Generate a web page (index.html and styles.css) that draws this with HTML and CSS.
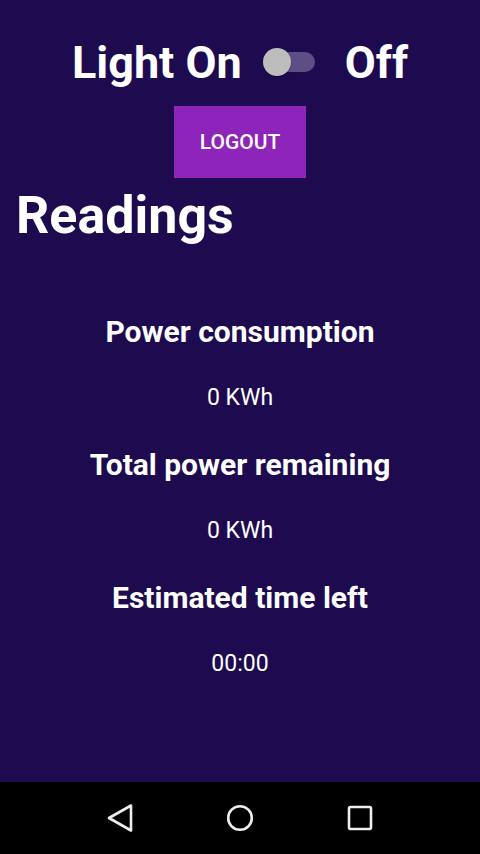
FILE: index.html
```html
<!DOCTYPE html>
<html>
<head>
<meta charset="utf-8">
<link rel="stylesheet" href="styles.css">
</head>
<body>
<div class="app">
  <div class="header">
    <span class="label">Light On</span>
    <span class="switch"><span class="track"></span><span class="thumb"></span></span>
    <span class="label">Off</span>
  </div>
  <div class="btn-row"><button class="logout">LOGOUT</button></div>
  <h1 class="title">Readings</h1>
  <div class="readings">
    <div class="item">
      <div class="item-title">Power consumption</div>
      <div class="item-value">0 KWh</div>
    </div>
    <div class="item">
      <div class="item-title">Total power remaining</div>
      <div class="item-value">0 KWh</div>
    </div>
    <div class="item">
      <div class="item-title">Estimated time left</div>
      <div class="item-value">00:00</div>
    </div>
  </div>
</div>
<div class="navbar">
  <svg class="nav-icon" width="28" height="30" viewBox="0 0 28 30"><path d="M25 2.5 L3 15 L25 27.5 Z" fill="none" stroke="#eeeeee" stroke-width="2.6" stroke-linejoin="round"/></svg>
  <svg class="nav-icon" width="28" height="28" viewBox="0 0 28 28"><circle cx="14" cy="14" r="11.8" fill="none" stroke="#eeeeee" stroke-width="2.6"/></svg>
  <svg class="nav-icon" width="28" height="28" viewBox="0 0 28 28"><rect x="3" y="3" width="22" height="22" rx="1.5" fill="none" stroke="#eeeeee" stroke-width="2.6"/></svg>
</div>
</body>
</html>
```

FILE: styles.css
```css
html, body {
  margin: 0;
  padding: 0;
}
body {
  width: 480px;
  height: 854px;
  font-family: Roboto, "Noto Sans", sans-serif;
  color: #ffffff;
  background: #000000;
  overflow: hidden;
}
.app {
  height: 782px;
  background: #1d0a4f;
  display: flex;
  flex-direction: column;
}
.header {
  display: flex;
  justify-content: center;
  align-items: center;
  height: 62px;
  padding-top: 31px;
}
.label {
  font-size: 45px;
  font-weight: 700;
  line-height: 1;
}
.switch {
  position: relative;
  width: 52px;
  height: 28px;
  margin: 0 30px 0 21px;
}
.track {
  position: absolute;
  left: 6px;
  right: 0;
  top: 4px;
  height: 20px;
  border-radius: 10px;
  background: #5d4f86;
}
.thumb {
  position: absolute;
  left: 0;
  top: 0;
  width: 28px;
  height: 28px;
  border-radius: 50%;
  background: #bdbdbd;
  box-shadow: 0 1px 2px rgba(0,0,0,0.35);
}
.btn-row {
  display: flex;
  justify-content: center;
  margin-top: 13px;
}
.logout {
  width: 132px;
  height: 72px;
  border: none;
  border-radius: 0;
  background: #8e24b9;
  color: #ffffff;
  font-family: Roboto, sans-serif;
  font-weight: 500;
  font-size: 21px;
  padding: 0;
  cursor: pointer;
}
.title {
  margin: 8px 0 0 16px;
  font-size: 52px;
  font-weight: 700;
  line-height: 60px;
}
.readings {
  display: flex;
  flex-direction: column;
  align-items: center;
  margin-top: 69px;
}
.item {
  display: flex;
  flex-direction: column;
  align-items: center;
  height: 133px;
}
.item-title {
  font-size: 30px;
  font-weight: 700;
  line-height: 34px;
}
.item-value {
  margin-top: 32px;
  font-size: 23px;
  font-weight: 400;
  line-height: 34px;
}
.navbar {
  height: 72px;
  background: #000000;
  display: flex;
  align-items: center;
  justify-content: center;
  gap: 92px;
}
.nav-icon {
  display: block;
}
```
